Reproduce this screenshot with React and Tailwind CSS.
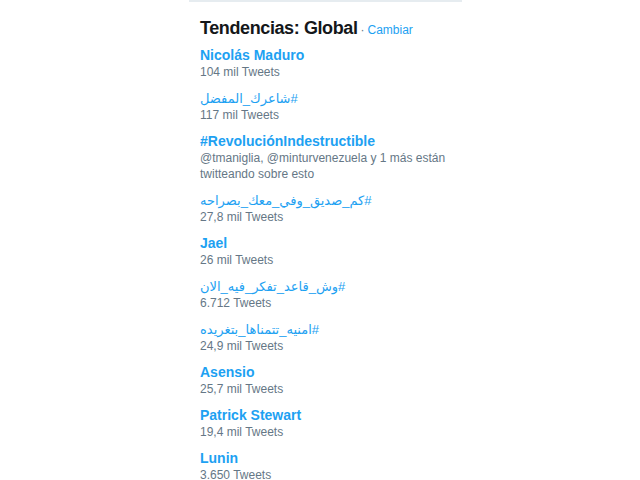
export default function App() {
  const items = [
    { t: "Nicolás Maduro", s: ["104 mil Tweets"] },
    { t: "#شاعرك_المفضل", rtl: true, s: ["117 mil Tweets"] },
    { t: "#RevoluciónIndestructible", s: ["@tmaniglia, @minturvenezuela y 1 más están", "twitteando sobre esto"] },
    { t: "#كم_صديق_وفي_معك_بصراحه", rtl: true, s: ["27,8 mil Tweets"] },
    { t: "Jael", s: ["26 mil Tweets"] },
    { t: "#وش_قاعد_تفكر_فيه_الان", rtl: true, s: ["6.712 Tweets"] },
    { t: "#امنيه_تتمناها_بتغريده", rtl: true, s: ["24,9 mil Tweets"] },
    { t: "Asensio", s: ["25,7 mil Tweets"] },
    { t: "Patrick Stewart", s: ["19,4 mil Tweets"] },
    { t: "Lunin", s: ["3.650 Tweets"] },
  ];
  return (
    <div className="w-[640px] h-[480px] bg-white overflow-hidden" style={{ fontFamily: '"Liberation Sans", "DejaVu Sans", sans-serif' }}>
      <div className="ml-[189px] w-[273px]">
        <div className="h-[2px] bg-[#e6ecf0]" />
        <div className="pl-[11px] pt-[14px]">
          <div className="flex items-baseline h-[26px]">
            <span className="text-[18px] font-bold text-[#14171a] leading-[24px] tracking-[-0.4px]">Tendencias: Global</span>
            <span className="text-[12px] text-[#657786] ml-[3px]">·</span>
            <span className="text-[12px] text-[#1da1f2] ml-[3px]">Cambiar</span>
          </div>
          <div className="mt-[4px]">
            {items.map((it, i) => (
              <div key={i} className="pb-[9px]">
                <div className="h-[18px] leading-[18px] text-[14px] font-bold text-[#1da1f2]">
                  {it.rtl ? (
                    <bdi dir="rtl" className="inline-block font-normal text-[13px]">{it.t}</bdi>
                  ) : (
                    it.t
                  )}
                </div>
                {it.s.map((l, j) => (
                  <div key={j} className="text-[12px] leading-[16px] text-[#657786]">{l}</div>
                ))}
              </div>
            ))}
          </div>
        </div>
      </div>
    </div>
  );
}
